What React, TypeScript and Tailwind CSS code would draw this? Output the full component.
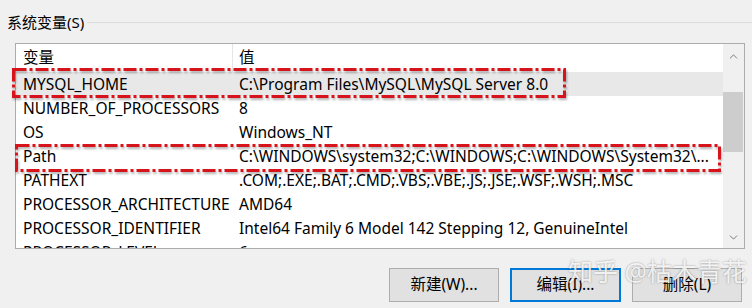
import React from "react";
import { ChevronUp, ChevronDown } from "lucide-react";

const rows: [string, string][] = [
  ["MYSQL_HOME", "C:\\Program Files\\MySQL\\MySQL Server 8.0"],
  ["NUMBER_OF_PROCESSORS", "8"],
  ["OS", "Windows_NT"],
  ["Path", "C:\\WINDOWS\\system32;C:\\WINDOWS;C:\\WINDOWS\\System32\\..."],
  ["PATHEXT", ".COM;.EXE;.BAT;.CMD;.VBS;.VBE;.JS;.JSE;.WSF;.WSH;.MSC"],
  ["PROCESSOR_ARCHITECTURE", "AMD64"],
  ["PROCESSOR_IDENTIFIER", "Intel64 Family 6 Model 142 Stepping 12, GenuineIntel"],
  ["PROCESSOR_LEVEL", "6"],
];

// red dash-dot annotation box
function Mark({ x, y, w, h }: { x: number; y: number; w: number; h: number }) {
  return (
    <svg
      className="absolute pointer-events-none drop-shadow-[1px_2px_1px_rgba(0,0,0,0.3)]"
      style={{ left: x, top: y, width: w, height: h }}
      viewBox={`0 0 ${w} ${h}`}
    >
      <rect
        x="1.5"
        y="1.5"
        width={w - 3}
        height={h - 3}
        fill="none"
        stroke="#d7141c"
        strokeWidth="3"
        strokeDasharray="13 3 3 3"
      />
    </svg>
  );
}

export default function App() {
  return (
    <div className="relative w-[752px] h-[308px] overflow-hidden bg-[#f0f0f0] text-black font-['Noto_Sans','Noto_Sans_CJK_SC',sans-serif] text-[15.5px]">
      {/* group title */}
      <div className="flex items-center h-[20px] mt-[12px] pl-[7px]">
        <span className="leading-none text-[15px]">系统变量(S)</span>
        <div className="flex-1 h-px bg-[#dcdcdc] ml-[3px]" />
      </div>

      {/* list view */}
      <div className="flex ml-[15px] mt-[11px] w-[730px] h-[206px] border border-[#acacac] bg-white">
        <div className="flex-1 overflow-hidden">
          <div className="flex h-[28px] items-center">
            <div className="w-[217px] pl-[7px] h-full flex items-center border-r border-[#e5e5e5]">变量</div>
            <div className="pl-[6px]">值</div>
          </div>
          {rows.map(([name, value], i) => (
            <div
              key={name}
              className={`flex h-[24px] pt-[1px] items-center whitespace-nowrap ${i === 0 ? "bg-[#e8e8e8]" : ""}`}
            >
              <div className="w-[217px] shrink-0 pl-[7px]">{name}</div>
              <div className="pl-[6px]">{value}</div>
            </div>
          ))}
        </div>

        {/* scrollbar */}
        <div className="w-[21px] flex flex-col bg-[#f0f0f0]">
          <div className="h-[24px] flex items-center justify-center text-[#606060]">
            <ChevronUp size={13} strokeWidth={1.5} />
          </div>
          <div className="flex-1 flex flex-col">
            <div className="h-[24px]" />
            <div className="h-[60px] mr-[1px] bg-[#cdcdcd]" />
          </div>
          <div className="h-[22px] flex items-center justify-center text-[#606060]">
            <ChevronDown size={13} strokeWidth={1.5} />
          </div>
        </div>
      </div>

      {/* buttons */}
      <div className="flex justify-end gap-[11px] mt-[19px] pr-[10px]">
        <button className="w-[110px] h-[34px] bg-[#e1e1e1] border border-[#adadad]">新建(W)...</button>
        <button className="w-[111px] h-[34px] bg-[#e1e1e1] border-2 border-[#0078d7]">编辑(I)...</button>
        <button className="w-[110px] h-[34px] bg-[#e1e1e1] border border-[#adadad]">删除(L)</button>
      </div>

      {/* annotations */}
      <Mark x={12} y={68} w={554} h={30} />
      <Mark x={15} y={144} w={706} h={28} />

      {/* watermark */}
      <div className="absolute left-[568px] top-[259px] text-[25px] leading-none text-white/85 [text-shadow:0_0_2px_rgba(0,0,0,0.4)] whitespace-nowrap">
        知乎 @枯木青花
      </div>
    </div>
  );
}
